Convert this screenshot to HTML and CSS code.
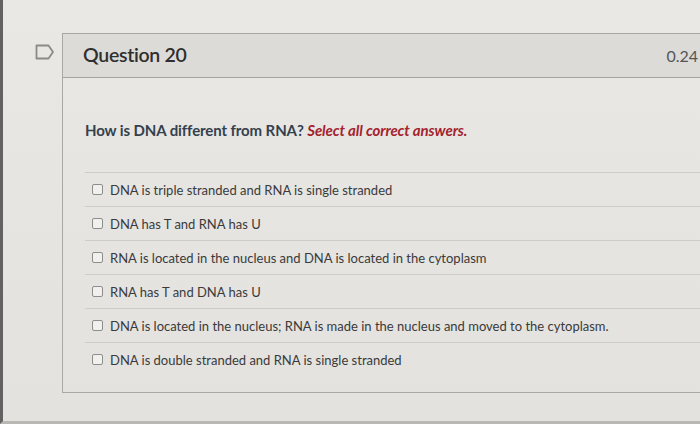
FILE: index.html
```html
<!DOCTYPE html>
<html lang="en">
<head>
<meta charset="utf-8">
<title>Question 20</title>
<link rel="stylesheet" href="styles.css">
</head>
<body>
<div class="screen">
  <div class="page">
    <div class="flag-col">
      <svg class="flag" width="20" height="16" viewBox="0 0 20 16" aria-hidden="true">
        <path d="M1.5 1.5 H13.5 L18 8 L13.5 14.5 H1.5 Z" fill="none" stroke="#8a8a88" stroke-width="1.8" stroke-linejoin="round"/>
      </svg>
    </div>
    <div class="card">
      <div class="card-header">
        <span class="q-title">Question 20</span>
        <span class="q-points">0.24</span>
      </div>
      <div class="card-body">
        <p class="q-text">How is DNA different from RNA? <em class="q-hint">Select all correct answers.</em></p>
        <ul class="answers">
          <li class="answer"><span class="box"></span><span>DNA is triple stranded and RNA is single stranded</span></li>
          <li class="answer"><span class="box"></span><span>DNA has T and RNA has U</span></li>
          <li class="answer"><span class="box"></span><span>RNA is located in the nucleus and DNA is located in the cytoplasm</span></li>
          <li class="answer"><span class="box"></span><span>RNA has T and DNA has U</span></li>
          <li class="answer"><span class="box"></span><span>DNA is located in the nucleus; RNA is made in the nucleus and moved to the cytoplasm.</span></li>
          <li class="answer"><span class="box"></span><span>DNA is double stranded and RNA is single stranded</span></li>
        </ul>
      </div>
    </div>
  </div>
</div>
</body>
</html>
```
FILE: styles.css
```css
html, body {
  margin: 0;
  padding: 0;
  height: 100%;
  overflow: hidden;
}
body {
  background: #e6e5e2;
  font-family: Lato, "Open Sans", sans-serif;
  color: #333;
}
.screen {
  height: 424px;
  box-sizing: border-box;
  border-left: 3px solid #626262;
  border-bottom: 3px solid #b9b8b5;
  background: linear-gradient(180deg, #e9e8e5 0%, #e5e4e1 60%, #e3e2df 100%);
}
.page {
  display: flex;
  padding-top: 33px;
}
.flag-col {
  width: 59px;
  flex: none;
  padding-top: 11px;
  box-sizing: border-box;
  padding-left: 32px;
}
.flag {
  display: block;
}
.card {
  flex: 1;
  min-width: 0;
  height: 360px;
  border: 1px solid #a9a8a5;
  border-right: none;
  box-sizing: border-box;
  display: flex;
  flex-direction: column;
}
.card-header {
  height: 44px;
  flex: none;
  background: #dcdbd8;
  border-bottom: 1px solid #a4a3a0;
  box-sizing: border-box;
  display: flex;
  align-items: center;
  justify-content: space-between;
  padding-left: 20px;
  padding-right: 2px;
}
.q-title {
  font-size: 19.5px;
  font-weight: 600;
  color: #2f2f2f;
  letter-spacing: -0.3px;
  position: relative;
  top: -1px;
}
.q-points {
  font-family: Lato, "Liberation Sans", sans-serif;
  font-size: 16px;
  color: #555;
}
.card-body {
  padding: 43px 0 0 22px;
}
.q-text {
  margin: 0;
  font-size: 15px;
  font-weight: 700;
  color: #34414d;
  line-height: 18px;
  letter-spacing: -0.1px;
}
.q-hint {
  color: #a3232e;
  font-style: italic;
}
.answers {
  list-style: none;
  margin: 33px 0 0 0;
  padding: 0;
}
.answer {
  height: 34px;
  border-top: 1px solid #cdccc9;
  display: flex;
  align-items: center;
  padding-left: 7px;
  font-size: 13px;
  color: #3a3a3a;
  box-sizing: border-box;
}
.box {
  width: 9px;
  height: 9px;
  border: 1.5px solid #8d8d8b;
  border-radius: 2px;
  background: #f1f0ee;
  margin-right: 7px;
  flex: none;
}
```
